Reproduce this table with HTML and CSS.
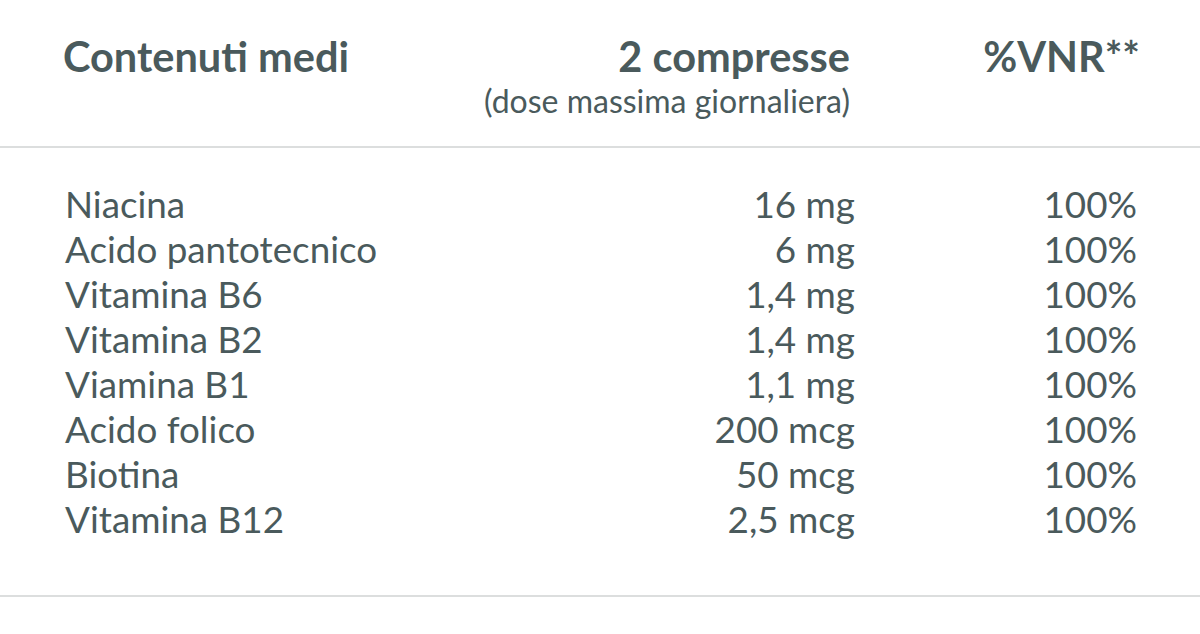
FILE: index.html
```html
<!DOCTYPE html>
<html lang="it">
<head>
<meta charset="utf-8">
<link rel="stylesheet" href="styles.css">
</head>
<body>
<div class="table">
  <div class="head">
    <div class="h-name">Contenuti medi</div>
    <div class="h-qty">2 compresse<span class="sub">(dose massima giornaliera)</span></div>
    <div class="h-vnr">%VNR**</div>
  </div>
  <div class="body">
    <div class="row"><span class="name">Niacina</span><span class="qty">16 mg</span><span class="vnr">100%</span></div>
    <div class="row"><span class="name">Acido pantotecnico</span><span class="qty">6 mg</span><span class="vnr">100%</span></div>
    <div class="row"><span class="name">Vitamina B6</span><span class="qty">1,4 mg</span><span class="vnr">100%</span></div>
    <div class="row"><span class="name">Vitamina B2</span><span class="qty">1,4 mg</span><span class="vnr">100%</span></div>
    <div class="row"><span class="name">Viamina B1</span><span class="qty">1,1 mg</span><span class="vnr">100%</span></div>
    <div class="row"><span class="name">Acido folico</span><span class="qty">200 mcg</span><span class="vnr">100%</span></div>
    <div class="row"><span class="name">Biotina</span><span class="qty">50 mcg</span><span class="vnr">100%</span></div>
    <div class="row"><span class="name">Vitamina B12</span><span class="qty">2,5 mcg</span><span class="vnr">100%</span></div>
  </div>
</div>
</body>
</html>
```
FILE: styles.css
```css
html, body {
  margin: 0;
  padding: 0;
  background: #ffffff;
}
body {
  font-family: Lato, "Noto Sans", sans-serif;
  color: #4a5a5c;
}
.table {
  width: 1200px;
}
.head {
  display: grid;
  grid-template-columns: 1fr 420px 290px;
  padding: 32px 60px 0 63px;
  height: 114px;
  border-bottom: 2px solid #dcdede;
}
.h-name, .h-qty, .h-vnr {
  font-weight: 700;
  font-size: 41.5px;
  line-height: 48px;
}
.h-qty {
  display: flex;
  flex-direction: column;
  align-items: flex-end;
}
.h-vnr {
  text-align: right;
}
.sub {
  font-weight: 400;
  font-size: 32px;
  line-height: 41px;
}
.body {
  padding: 34px 63px 53px 65px;
  border-bottom: 2px solid #dcdede;
}
.row {
  display: grid;
  grid-template-columns: 1fr 380px 282px;
  font-size: 36.8px;
  line-height: 45px;
}
.qty, .vnr {
  text-align: right;
}
```
